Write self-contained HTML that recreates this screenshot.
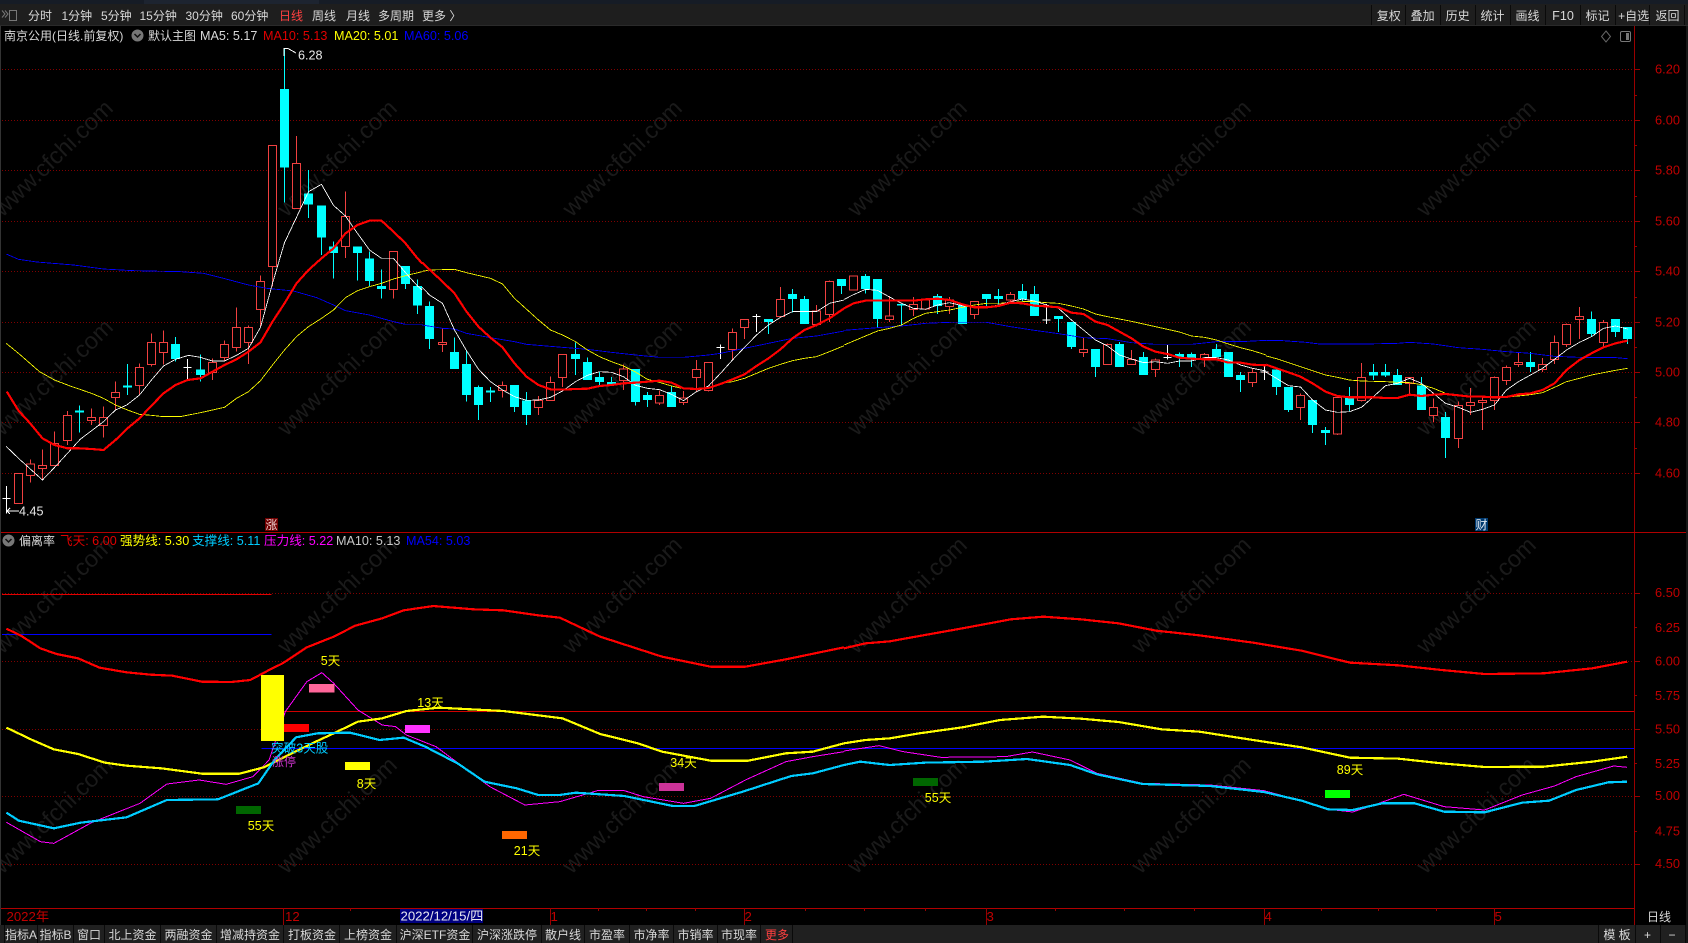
<!DOCTYPE html>
<html lang="zh">
<head>
<meta charset="utf-8">
<title>南京公用</title>
<style>
html,body{margin:0;padding:0;background:#000;width:1688px;height:943px;overflow:hidden}
svg{display:block}
text{font-family:"Liberation Sans","Noto Sans CJK SC",sans-serif;font-size:12px;fill:#d8d8d8}
.m{font-size:12.6px}
.t{font-size:13.2px}
.wm text{font-size:23.5px;fill:#1a1a1a;text-anchor:middle}
.ax text{fill:#c00000;font-size:12.8px;text-anchor:middle}
.y text{fill:#ffff00;font-size:12.5px;text-anchor:middle}
.c text{text-anchor:middle}
.crisp{shape-rendering:crispEdges}
.cw{stroke:#00ffff;stroke-width:3;fill:none}
.cb{fill:#00ffff;stroke:none}
.rw{stroke:#f04040;stroke-width:3;fill:none}
.rb{fill:#000;stroke:#f04040;stroke-width:3}
.wt{stroke:#fff;stroke-width:3;fill:none}
.l{fill:none}
.nss{vector-effect:non-scaling-stroke;fill:none}
</style>
</head>
<body>
<svg xmlns="http://www.w3.org/2000/svg" width="1688" height="943" viewBox="0 0 1688 943">
<rect width="1688" height="943" fill="#000"/>

<!-- watermark -->
<g class="wm">
<text transform="translate(53,158) rotate(-44)" dy="8">www.cfchi.com</text>
<text transform="translate(337,158) rotate(-44)" dy="8">www.cfchi.com</text>
<text transform="translate(622,158) rotate(-44)" dy="8">www.cfchi.com</text>
<text transform="translate(907,158) rotate(-44)" dy="8">www.cfchi.com</text>
<text transform="translate(1191,158) rotate(-44)" dy="8">www.cfchi.com</text>
<text transform="translate(1476,158) rotate(-44)" dy="8">www.cfchi.com</text>
<text transform="translate(53,377) rotate(-44)" dy="8">www.cfchi.com</text>
<text transform="translate(337,377) rotate(-44)" dy="8">www.cfchi.com</text>
<text transform="translate(622,377) rotate(-44)" dy="8">www.cfchi.com</text>
<text transform="translate(907,377) rotate(-44)" dy="8">www.cfchi.com</text>
<text transform="translate(1191,377) rotate(-44)" dy="8">www.cfchi.com</text>
<text transform="translate(1476,377) rotate(-44)" dy="8">www.cfchi.com</text>
<text transform="translate(53,595) rotate(-44)" dy="8">www.cfchi.com</text>
<text transform="translate(337,595) rotate(-44)" dy="8">www.cfchi.com</text>
<text transform="translate(622,595) rotate(-44)" dy="8">www.cfchi.com</text>
<text transform="translate(907,595) rotate(-44)" dy="8">www.cfchi.com</text>
<text transform="translate(1191,595) rotate(-44)" dy="8">www.cfchi.com</text>
<text transform="translate(1476,595) rotate(-44)" dy="8">www.cfchi.com</text>
<text transform="translate(53,815) rotate(-44)" dy="8">www.cfchi.com</text>
<text transform="translate(337,815) rotate(-44)" dy="8">www.cfchi.com</text>
<text transform="translate(622,815) rotate(-44)" dy="8">www.cfchi.com</text>
<text transform="translate(907,815) rotate(-44)" dy="8">www.cfchi.com</text>
<text transform="translate(1191,815) rotate(-44)" dy="8">www.cfchi.com</text>
<text transform="translate(1476,815) rotate(-44)" dy="8">www.cfchi.com</text>
</g>

<!-- dotted grid -->
<g class="crisp" stroke="#800000" stroke-width="1" stroke-dasharray="1 2" fill="none">
<path d="M2 69.5H1634M2 120.5H1634M2 170.5H1634M2 221.5H1634M2 271.5H1634M2 322.5H1634M2 372.5H1634M2 422.5H1634M2 473.5H1634"/>
<path d="M2 593.5H1634M2 661.5H1634M2 729.5H1634M2 796.5H1634M2 864.5H1634"/>
</g>

<!-- candles + MA: zone 1 -->
<g class="crisp" transform="translate(.167,130) scale(.33333)">
<path class="rw" d="M91 988V1058M127 958V1050M163 904V1006M202 843V945M274 835V885M310 829V923M346 754V840M418 700V795M454 610V710M490 601V704M637 685V750M673 631V695M709 532V665M745 587V702M781 436V590M817 46V470M889 18V236M1036 184V384M1180 365V506"/>
<path class="rb" d="M43 1030h24V1120h-24zM79 1002h24V1036h-24zM115 1007h24V1016h-24zM151 941h24V1006h-24zM190 857h24V931h-24zM262 863h24V872h-24zM298 863h24V886h-24zM334 787h24V802h-24zM406 713h24V766h-24zM442 637h24V704h-24zM478 638h24V667h-24zM625 697h24V727h-24zM661 643h24V682h-24zM697 592h24V652h-24zM733 592h24V637h-24zM769 455h24V538h-24zM805 46h24V409h-24zM877 100h24V236h-24zM1024 260h24V350h-24zM1168 365h24V478h-24z"/>
<path class="cw" d="M238 826V908M382 702V795M526 621V695M601 673V755M853 -246V218M925 120V264M964 226V375M1000 335V446M1072 349V452M1108 364V468M1144 418V506M1216 408V477M1252 448V552"/>
<path class="cb" d="M224.5 841h27V847h-27zM368.5 766h27V772h-27zM512.5 642h27V687h-27zM587.5 718h27V735h-27zM839.5 -123h27V113h-27zM911.5 190h27V224h-27zM950.5 226h27V323h-27zM986.5 349h27V369h-27zM1058.5 349h27V369h-27zM1094.5 385h27V453h-27zM1130.5 468h27V477h-27zM1202.5 408h27V462h-27zM1238.5 468h27V527h-27z"/>
<path class="wt" d="M19 1068V1150M7 1106H31M562 687V747M550 712H574"/>
<polyline class="l" stroke="#0000ff" stroke-width="2.5" points="18,372 55,388 110,396 220,405 310,417 400,422 540,425 610,430 670,445 745,465 800,475 880,483 950,503 1000,525 1036,542 1108,555 1180,575 1216,583 1266,583"/>
<polyline class="l" stroke="#ffff00" stroke-width="2.5" points="18,640 55,670 118,725 163,750 210,768 274,790 310,805 346,825 382,840 418,853 454,856 490,860 540,860 601,848 673,832 709,805 745,785 781,752 817,705 853,660 889,620 925,590 964,565 1000,540 1036,503 1072,482 1108,470 1144,460 1180,447 1216,437 1266,425"/>
<polyline class="l" stroke="#ffffff" stroke-width="2.5" points="18,949 55,985 127,1050 170,1005 240,928 310,875 346,840 380,825 418,795 454,750 490,708 526,688 565,676 600,682 637,693 673,693 709,676 745,655 781,592 817,460 853,338 889,262 925,185 964,163 1000,226 1036,258 1072,310 1108,360 1144,385 1180,385 1216,428 1252,468 1266,480"/>
<polyline class="l" stroke="#ff0000" stroke-width="6.5" points="20,785 55,842 90,880 127,925 163,945 202,955 238,955 274,957 310,960 346,930 382,895 418,865 454,827 490,790 526,765 562,750 601,745 637,725 673,705 709,688 745,665 781,637 817,575 853,520 889,460 925,420 964,385 1000,355 1036,310 1072,285 1108,272 1144,272 1180,305 1216,340 1252,385 1266,400"/>
</g>

<!-- zone 2 -->
<g class="crisp" transform="translate(422.167,260) scale(.33333)">
<path class="rw" d="M61 205V276M241 364V412M349 408V465M385 349V422M421 283V381M604 313V390M712 392V435M784 393V435M823 300V396M859 307V395M931 205V298M967 178V237M1075 81V172M1183 135V200M1222 62V186"/>
<path class="rb" d="M49 247h24V254h-24zM229 376h24V392h-24zM337 421h24V443h-24zM373 367h24V422h-24zM409 283h24V352h-24zM592 327h24V362h-24zM700 406h24V429h-24zM772 414h24V427h-24zM811 328h24V353h-24zM847 307h24V392h-24zM919 217h24V269h-24zM955 178h24V202h-24zM1063 118h24V169h-24zM1171 153h24V194h-24zM1210 64h24V164h-24z"/>
<path class="cw" d="M22 124V267M97 232V327M133 270V425M169 376V480M205 381V426M277 375V456M313 396V495M460 247V345M496 292V360M532 335V375M568 351V375M640 327V436M676 396V441M748 376V441M1039 177V222M1111 87V157M1147 108V192M1258 57V102"/>
<path class="cb" d="M8.5 138h27V237h-27zM83.5 276h27V327h-27zM119.5 312h27V405h-27zM155.5 381h27V435h-27zM191.5 391h27V397h-27zM263.5 375h27V441h-27zM299.5 421h27V465h-27zM446.5 282h27V297h-27zM482.5 306h27V360h-27zM518.5 351h27V366h-27zM554.5 366h27V375h-27zM626.5 327h27V426h-27zM662.5 405h27V420h-27zM734.5 396h27V441h-27zM1025.5 177h27V186h-27zM1097.5 102h27V117h-27zM1133.5 117h27V192h-27zM1244.5 57h27V78h-27z"/>
<path class="wt" d="M895 253V297M883 262H907M1003 162V216M991 169H1015"/>
<polyline class="l" stroke="#0000ff" stroke-width="2.5" points="0,195 61,205 97,207 133,220 205,233 277,245 313,253 421,262 496,268 568,277 640,285 712,292 784,292 859,285 895,280 967,265 1039,250 1111,235 1183,228 1266,213"/>
<polyline class="l" stroke="#ffff00" stroke-width="2.5" points="0,34 22,30 97,28 133,38 205,55 241,72 277,115 349,180 385,210 421,225 460,245 496,270 532,290 568,305 604,318 640,336 676,358 712,367 748,378 784,386 823,385 859,382 895,370 931,365 967,355 1003,340 1039,325 1075,313 1111,302 1147,295 1183,290 1222,275 1266,257"/>
<polyline class="l" stroke="#ffffff" stroke-width="2.5" points="0,82 22,105 61,130 97,210 133,272 169,328 205,365 241,390 277,410 313,421 349,420 385,412 421,393 460,365 496,346 532,335 568,337 604,350 640,376 676,385 712,389 748,403 784,422 823,395 859,378 895,340 931,300 967,262 1003,225 1039,195 1075,172 1111,155 1147,155 1183,155 1222,130 1266,120"/>
<polyline class="l" stroke="#ff0000" stroke-width="6.5" points="0,8 61,65 97,100 133,155 169,200 205,233 241,262 277,310 313,350 349,375 385,388 421,389 460,387 496,386 532,378 568,375 604,370 640,368 676,365 712,362 748,368 784,385 823,387 859,384 895,372 931,358 967,343 1003,318 1039,295 1075,268 1111,235 1147,210 1183,195 1222,175 1266,145"/>
</g>

<!-- zone 3 -->
<g class="crisp" transform="translate(844.167,260) scale(.33333)">
<path class="rw" d="M28 46V92M136 108V186M208 111V168M244 118V150M316 111V162M391 124V177M499 96V127M718 232V291M790 250V314M862 270V314M934 295V351M1081 279V321M1225 324V381"/>
<path class="rb" d="M16 48h24V90h-24zM124 168h24V179h-24zM196 133h24V149h-24zM232 120h24V147h-24zM304 120h24V140h-24zM379 124h24V164h-24zM487 103h24V120h-24zM706 268h24V277h-24zM778 253h24V314h-24zM850 298h24V314h-24zM922 300h24V328h-24zM1069 283h24V297h-24zM1213 337h24V368h-24z"/>
<path class="cw" d="M64 42V101M100 57V202M172 132V195M280 102V162M355 135V192M427 102V138M463 87V132M535 72V123M571 78V168M643 168V216M682 186V267M754 267V351M826 246V321M898 276V345M1006 277V321M1042 277V321M1117 252V291M1153 276V351M1189 336V396"/>
<path class="cb" d="M-13.5 57h16V78h-16zM50.5 48h27V87h-27zM86.5 57h27V177h-27zM158.5 132h27V137h-27zM266.5 108h27V138h-27zM341.5 135h27V192h-27zM413.5 102h27V117h-27zM449.5 108h27V117h-27zM521.5 93h27V117h-27zM557.5 102h27V168h-27zM629.5 168h27V177h-27zM668.5 186h27V261h-27zM740.5 267h27V321h-27zM812.5 252h27V321h-27zM884.5 291h27V345h-27zM992.5 282h27V291h-27zM1028.5 282h27V297h-27zM1103.5 267h27V291h-27zM1139.5 276h27V351h-27zM1175.5 345h27V360h-27z"/>
<path class="wt" d="M607 132V192M595 180H619M970 255V298M958 292H982M1261 320V360M1249 336H1273"/>
<polyline class="l" stroke="#0000ff" stroke-width="2.5" points="0,211 100,203 172,198 244,190 316,187 427,187 499,200 571,211 643,221 718,233 790,236 862,248 934,253 1042,253 1117,245 1189,245 1266,241"/>
<polyline class="l" stroke="#ffff00" stroke-width="2.5" points="0,255 64,228 100,213 136,205 172,195 208,175 244,160 280,155 316,150 355,142 391,135 427,130 463,130 499,128 535,125 571,125 607,128 643,130 682,138 718,147 754,162 790,170 826,177 862,184 898,192 934,200 970,208 1006,216 1042,228 1081,232 1117,240 1153,252 1189,263 1225,272 1266,285"/>
<polyline class="l" stroke="#ffffff" stroke-width="2.5" points="0,118 28,104 64,88 100,91 136,111 172,130 208,145 244,148 280,135 316,128 355,137 391,142 427,142 463,135 499,125 535,117 571,123 607,135 643,145 682,180 718,210 754,240 790,258 826,285 862,297 898,308 934,305 970,310 1006,303 1042,303 1081,293 1117,293 1153,300 1189,315 1225,325 1266,333"/>
<polyline class="l" stroke="#ff0000" stroke-width="6.5" points="0,145 28,130 64,122 100,122 136,122 172,122 208,122 244,118 280,116 316,120 355,133 391,142 427,142 463,138 499,128 535,130 571,137 607,139 643,142 682,158 718,162 754,185 790,195 826,215 862,235 898,260 934,275 970,282 1006,293 1042,296 1081,298 1117,298 1153,308 1189,308 1225,314 1266,316"/>
</g>

<!-- zone 4 -->
<g class="crisp" transform="translate(1266.167,290) scale(.33333)">
<path class="rw" d="M103 310V390M214 322V435M286 219V335M430 262V312M502 325V396M577 334V474M613 294V375M649 322V420M685 259V360M721 226V285M757 187V231M829 204V246M865 136V222M901 100V171M940 51V147M1012 90V175"/>
<path class="rb" d="M91 316h24V353h-24zM202 322h24V432h-24zM274 262h24V332h-24zM418 262h24V280h-24zM490 352h24V376h-24zM565 346h24V445h-24zM601 337h24V346h-24zM637 331h24V338h-24zM673 262h24V331h-24zM709 232h24V272h-24zM745 217h24V224h-24zM817 224h24V239h-24zM853 157h24V208h-24zM889 103h24V163h-24zM928 79h24V88h-24zM1000 97h24V157h-24z"/>
<path class="cw" d="M31 238V315M67 291V366M139 330V429M178 411V465M250 291V363M322 222V270M358 222V261M394 237V285M466 261V360M538 366V504M793 186V246M976 64V141M1048 87V141M1084 111V162"/>
<path class="cb" d="M17.5 238h27V291h-27zM53.5 291h27V360h-27zM125.5 330h27V405h-27zM164.5 420h27V429h-27zM236.5 322h27V345h-27zM308.5 246h27V256h-27zM344.5 246h27V256h-27zM380.5 255h27V285h-27zM452.5 286h27V360h-27zM524.5 381h27V444h-27zM779.5 216h27V231h-27zM962.5 87h27V132h-27zM1034.5 87h27V126h-27zM1070.5 111h27V147h-27z"/>
<polyline class="l" stroke="#0000ff" stroke-width="2.5" points="0,151 50,152 120,157 160,162 300,162 394,160 430,157 502,162 577,173 649,178 721,185 793,190 865,199 940,202 1050,203 1084,206"/>
<polyline class="l" stroke="#ffff00" stroke-width="2.5" points="0,198 31,206 67,218 103,230 139,242 178,255 214,262 250,270 286,273 322,274 358,275 394,277 430,278 466,284 502,295 538,310 577,316 613,318 649,320 685,322 721,321 757,318 793,314 829,308 865,292 901,275 940,265 976,255 1012,248 1048,241 1084,235"/>
<polyline class="l" stroke="#ffffff" stroke-width="2.5" points="0,247 31,265 67,287 103,291 139,330 178,360 214,367 250,365 286,352 322,320 358,287 394,280 430,265 466,280 502,310 538,340 577,352 613,367 649,358 685,345 721,300 757,275 793,255 829,235 865,208 901,180 940,157 976,140 1012,115 1048,108 1084,117"/>
<polyline class="l" stroke="#ff0000" stroke-width="6.5" points="0,224 31,235 67,247 103,260 139,280 178,305 214,318 250,322 286,322 322,322 358,324 394,324 430,314 466,318 502,314 538,312 577,316 613,320 649,320 685,322 721,321 757,313 793,310 829,300 865,280 901,240 940,210 976,190 1012,172 1048,160 1084,152"/>
</g>

<!-- high / low markers -->
<path class="crisp" d="M284 48V56M284 48.500H288L296 53M7 511H19M7 511L10 508M7 511L10 514" fill="none" stroke="#fff"/>
<text class="m" x="298" y="59.500" style="fill:#e8e8e8">6.28</text>
<text class="m" x="19" y="515.500" style="fill:#e8e8e8">4.45</text>

<!-- 涨 财 -->
<rect x="265" y="518" width="13" height="13" fill="#700000"/>
<text x="265.500" y="529" style="fill:#f0d0d0">涨</text>
<rect x="1475" y="518" width="13" height="13" fill="#003a70"/>
<text x="1475.500" y="529" style="fill:#e0e8f0">财</text>

<!-- indicator panel left -->
<g class="crisp" transform="translate(0,530) scale(.53827,.33333)">
<g stroke-width="1">
<polyline class="nss" stroke="#e00000" points="4,193 504,193"/>
<polyline class="nss" stroke="#0000ff" points="4,313 504,313"/>
<polyline class="nss" stroke="#d00000" points="528,544 1568,544"/>
<polyline class="nss" stroke="#0000ff" points="486,655 1568,655"/>
</g>
<polyline class="nss" stroke="#ff00ff" stroke-width="1" points="12,877 75,935 100,940 170,878 260,820 310,762 370,750 420,763 470,740 500,690 530,545 570,455 598,428 620,460 665,540 710,585 735,590 755,615 810,650 860,710 910,770 975,825 1040,815 1110,782 1160,782 1195,800 1270,820 1320,805 1385,750 1460,695 1510,680 1568,665"/>
<polyline class="nss" stroke="#ff0000" stroke-width="2.2" points="12,296 40,318 75,355 105,372 145,385 185,413 235,427 280,434 320,437 375,455 430,456 465,450 500,420 525,400 570,352 620,320 660,287 710,265 750,241 805,228 880,238 935,241 1000,256 1040,263 1115,320 1230,380 1320,410 1385,410 1460,388 1568,352"/>
<polyline class="nss" stroke="#ffff00" stroke-width="2.2" points="12,593 60,630 100,658 145,672 195,698 235,707 300,715 375,731 445,731 490,712 530,680 580,640 620,610 665,575 710,565 755,543 815,533 935,543 1000,556 1045,565 1115,612 1185,640 1230,665 1320,692 1390,692 1460,670 1510,665 1568,640"/>
<polyline class="nss" stroke="#00ccff" stroke-width="2.2" points="12,848 35,872 100,895 150,878 235,862 310,810 405,808 480,760 510,690 550,622 590,610 650,608 705,630 750,623 790,650 850,700 900,755 960,775 1000,795 1040,795 1070,788 1160,798 1250,828 1290,828 1380,785 1470,738 1510,730 1568,705"/>
<rect x="485" y="435" width="43" height="198" fill="#ffff00"/>
<rect x="528" y="582" width="46" height="24" fill="#ff0000"/>
<rect x="574" y="462" width="47" height="26" fill="#ff6699"/>
<rect x="752" y="585" width="47" height="24" fill="#ff33ff"/>
<rect x="641" y="696" width="46" height="24" fill="#ffff00"/>
<rect x="438" y="828" width="47" height="24" fill="#006600"/>
<rect x="933" y="903" width="46" height="24" fill="#ff6600"/>
<rect x="1224" y="759" width="47" height="24" fill="#cc3399"/>
</g>
<!-- indicator panel right -->
<g class="crisp" transform="translate(844,530) scale(.53827,.33333)">
<g stroke-width="1">
<polyline class="nss" stroke="#d00000" points="0,544 1468,544"/>
<polyline class="nss" stroke="#0000ff" points="0,655 1468,655"/>
</g>
<polyline class="nss" stroke="#ff00ff" stroke-width="1" points="0,663 65,647 110,665 180,682 300,680 350,666 420,690 470,730 555,760 680,765 780,782 850,812 900,838 945,846 985,825 1040,793 1115,830 1190,840 1260,795 1320,768 1360,740 1430,708 1455,712"/>
<polyline class="nss" stroke="#ff0000" stroke-width="2.2" points="0,355 40,340 85,334 140,318 220,295 310,268 370,260 440,268 510,280 580,302 660,316 760,338 850,362 940,398 1030,406 1110,420 1190,432 1300,430 1390,415 1455,395"/>
<polyline class="nss" stroke="#ffff00" stroke-width="2.2" points="0,640 40,630 85,625 140,610 220,592 290,570 370,560 440,566 510,576 590,598 660,605 760,630 850,652 940,683 1030,686 1110,700 1190,711 1300,710 1390,695 1455,680"/>
<polyline class="nss" stroke="#00ccff" stroke-width="2.2" points="0,705 30,695 85,705 150,698 260,695 340,687 420,705 470,733 555,762 680,768 780,786 850,812 900,838 945,840 1000,820 1060,820 1115,845 1190,847 1260,818 1310,812 1360,780 1420,757 1455,755"/>
<rect x="128" y="744" width="47" height="24" fill="#006600"/>
<rect x="894" y="780" width="46" height="24" fill="#00ff00"/>
</g>

<!-- indicator labels -->
<g class="y">
<text x="330.500" y="665">5天</text>
<text x="430.500" y="707">13天</text>
<text x="366.500" y="788">8天</text>
<text x="261" y="830">55天</text>
<text x="527" y="855">21天</text>
<text x="683.500" y="767">34天</text>
<text x="938" y="802">55天</text>
<text x="1350" y="774">89天</text>
</g>
<text class="m" x="271" y="752.500" style="fill:#00ccff">突破3天股</text>
<text x="272" y="766" style="fill:#cc33cc">涨停</text>

<!-- axes -->
<g class="crisp" fill="none" stroke="#990000">
<path d="M1634.500 26V925"/>
<path d="M0 532.500H1688" stroke="#b00000"/>
<path d="M0 908.500H1634" stroke="#b00000"/>
<path d="M1634 69.500h6M1634 95.500h3M1634 120.500h6M1634 145.500h3M1634 170.500h6M1634 196.500h3M1634 221.500h6M1634 246.500h3M1634 271.500h6M1634 297.500h3M1634 322.500h6M1634 347.500h3M1634 372.500h6M1634 397.500h3M1634 422.500h6M1634 448.500h3M1634 473.500h6"/>
<path d="M1634 593.500h6M1634 627.500h3M1634 661.500h6M1634 695.500h3M1634 729.500h6M1634 763.500h3M1634 796.500h6M1634 831.500h3M1634 864.500h6"/>
<path d="M283.500 908V925M550.500 908V925M744.500 908V925M986.500 908V925M1264.500 908V925M1494.500 908V925"/>
<path d="M350.500 908v3M598.500 908v3M646.500 908v3M695.500 908v3M805.500 908v3M864.500 908v3M925.500 908v3M1055.500 908v3M1124.500 908v3M1194.500 908v3M1321.500 908v3M1378.500 908v3M1436.500 908v3"/>
</g>
<g class="ax">
<text x="1667.500" y="73.500">6.20</text>
<text x="1667.500" y="124.500">6.00</text>
<text x="1667.500" y="174.500">5.80</text>
<text x="1667.500" y="225.500">5.60</text>
<text x="1667.500" y="275.500">5.40</text>
<text x="1667.500" y="326.500">5.20</text>
<text x="1667.500" y="376.500">5.00</text>
<text x="1667.500" y="426.500">4.80</text>
<text x="1667.500" y="477.500">4.60</text>
<text x="1667.500" y="597">6.50</text>
<text x="1667.500" y="632">6.25</text>
<text x="1667.500" y="665.500">6.00</text>
<text x="1667.500" y="700">5.75</text>
<text x="1667.500" y="733.500">5.50</text>
<text x="1667.500" y="768">5.25</text>
<text x="1667.500" y="800">5.00</text>
<text x="1667.500" y="835.500">4.75</text>
<text x="1667.500" y="868">4.50</text>
</g>

<!-- time axis -->
<text class="t" x="6.500" y="921" style="fill:#c00000">2022年</text>
<text class="t" x="285" y="921" style="fill:#c00000">12</text>
<rect x="400" y="909" width="83" height="14" fill="#000080"/>
<text class="t" x="400.500" y="920.500" style="fill:#e8e8f0">2022/12/15/四</text>
<text class="t" x="550.500" y="921" style="fill:#c00000">1</text>
<text class="t" x="744.500" y="921" style="fill:#c00000">2</text>
<text class="t" x="986.500" y="921" style="fill:#c00000">3</text>
<text class="t" x="1264.500" y="921" style="fill:#c00000">4</text>
<text class="t" x="1494.500" y="921" style="fill:#c00000">5</text>
<text x="1647" y="921">日线</text>

<!-- legend rows -->
<text x="4" y="40">南京公用(日线.前复权)</text>
<circle cx="137.500" cy="35.500" r="6" fill="#777"/>
<path d="M134.500 34l3 3 3-3" fill="none" stroke="#111" stroke-width="1.500"/>
<text x="148" y="40">默认主图</text>
<text class="m" x="200" y="40">MA5: 5.17</text>
<text class="m" x="263" y="40" style="fill:#e00000">MA10: 5.13</text>
<text class="m" x="334" y="40" style="fill:#ffff00">MA20: 5.01</text>
<text class="m" x="404" y="40" style="fill:#0000ff">MA60: 5.06</text>
<path d="M1606 31l4.500 5.500-4.500 5.500-4.500-5.500z" fill="none" stroke="#666"/>
<rect x="1620.500" y="31.500" width="10" height="10" rx="1.500" fill="none" stroke="#777"/>
<rect x="1626" y="33" width="3" height="7" fill="#777"/>

<circle cx="8.500" cy="540.500" r="6" fill="#777"/>
<path d="M5.500 539l3 3 3-3" fill="none" stroke="#111" stroke-width="1.500"/>
<text x="19" y="545">偏离率</text>
<text class="m" x="60" y="545" style="fill:#e00000">飞天: 6.00</text>
<text class="m" x="120" y="545" style="fill:#ffff00">强势线: 5.30</text>
<text class="m" x="192" y="545" style="fill:#00ccff">支撑线: 5.11</text>
<text class="m" x="264" y="545" style="fill:#ff00ff">压力线: 5.22</text>
<text class="m" x="336" y="545" style="fill:#c8c8c8">MA10: 5.13</text>
<text class="m" x="406" y="545" style="fill:#0000ff">MA54: 5.03</text>

<!-- top toolbar -->
<g class="crisp">
<rect x="0" y="0" width="1688" height="4" fill="#161c26"/>
<rect x="144" y="0" width="175" height="4" fill="#1d2430"/>
<rect x="0" y="4" width="1688" height="21" fill="#1e1e1e"/>
<rect x="0" y="25" width="1688" height="1" fill="#2a2a2a"/>
<path d="M1371.500 5V25M1405.500 5V25M1440.500 5V25M1475.500 5V25M1510.500 5V25M1545.500 5V25M1580.500 5V25M1615.500 5V25M1649.500 5V25M1684.500 5V25" stroke="#0a0a0a"/>
</g>
<path d="M2 10.500l3 3.500-3 3.500M5 10.500l3 3.500-3 3.500" fill="none" stroke="#777"/>
<rect x="9.500" y="10.500" width="7" height="10" fill="none" stroke="#777"/>
<text x="28" y="20">分时</text>
<text x="61.500" y="20">1分钟</text>
<text x="101" y="20">5分钟</text>
<text x="139.500" y="20">15分钟</text>
<text x="185.500" y="20">30分钟</text>
<text x="231" y="20">60分钟</text>
<text x="279" y="20" style="fill:#ff4040">日线</text>
<text x="312" y="20">周线</text>
<text x="346" y="20">月线</text>
<text x="378" y="20">多周期</text>
<text x="422" y="20">更多 〉</text>
<g class="c">
<text x="1388.700" y="20">复权</text>
<text x="1422.600" y="20">叠加</text>
<text x="1457.600" y="20">历史</text>
<text x="1492.500" y="20">统计</text>
<text x="1527.500" y="20">画线</text>
<text class="m" x="1563" y="20">F10</text>
<text x="1597.500" y="20">标记</text>
<text x="1633.600" y="20">+自选</text>
<text x="1667.500" y="20">返回</text>
</g>

<!-- bottom tabs -->
<g class="crisp">
<rect x="0" y="925" width="1688" height="18" fill="#202020"/>
<path d="M4.500 925V943M37.500 925V943M73.500 925V943M104.500 925V943M160.500 925V943M216.500 925V943M283.500 925V943M339.500 925V943M396.500 925V943M472.500 925V943M541.500 925V943M584.500 925V943M629.500 925V943M673.500 925V943M717.500 925V943M760.500 925V943M792.500 925V943M1598.500 925V943M1635.500 925V943M1660.500 925V943M1685.500 925V943" stroke="#0a0a0a"/>
</g>
<g class="c">
<text x="21" y="939">指标A</text>
<text x="55.500" y="939">指标B</text>
<text x="89" y="939">窗口</text>
<text x="132.500" y="939">北上资金</text>
<text x="188.500" y="939">两融资金</text>
<text x="250" y="939">增减持资金</text>
<text x="312" y="939">打板资金</text>
<text x="368" y="939">上榜资金</text>
<text x="435" y="939">沪深ETF资金</text>
<text x="507" y="939">沪深涨跌停</text>
<text x="563" y="939">散户线</text>
<text x="607" y="939">市盈率</text>
<text x="651.500" y="939">市净率</text>
<text x="695.500" y="939">市销率</text>
<text x="739" y="939">市现率</text>
<text x="777" y="939" style="fill:#ff4040">更多</text>
<text x="1617" y="939">模 板</text>
<text x="1647.500" y="939">+</text>
<text x="1672" y="939">−</text>
</g>

<rect x="0" y="26" width="1" height="899" fill="#333"/>
<rect x="1686" y="26" width="2" height="917" fill="#161616"/>
</svg>
</body>
</html>
